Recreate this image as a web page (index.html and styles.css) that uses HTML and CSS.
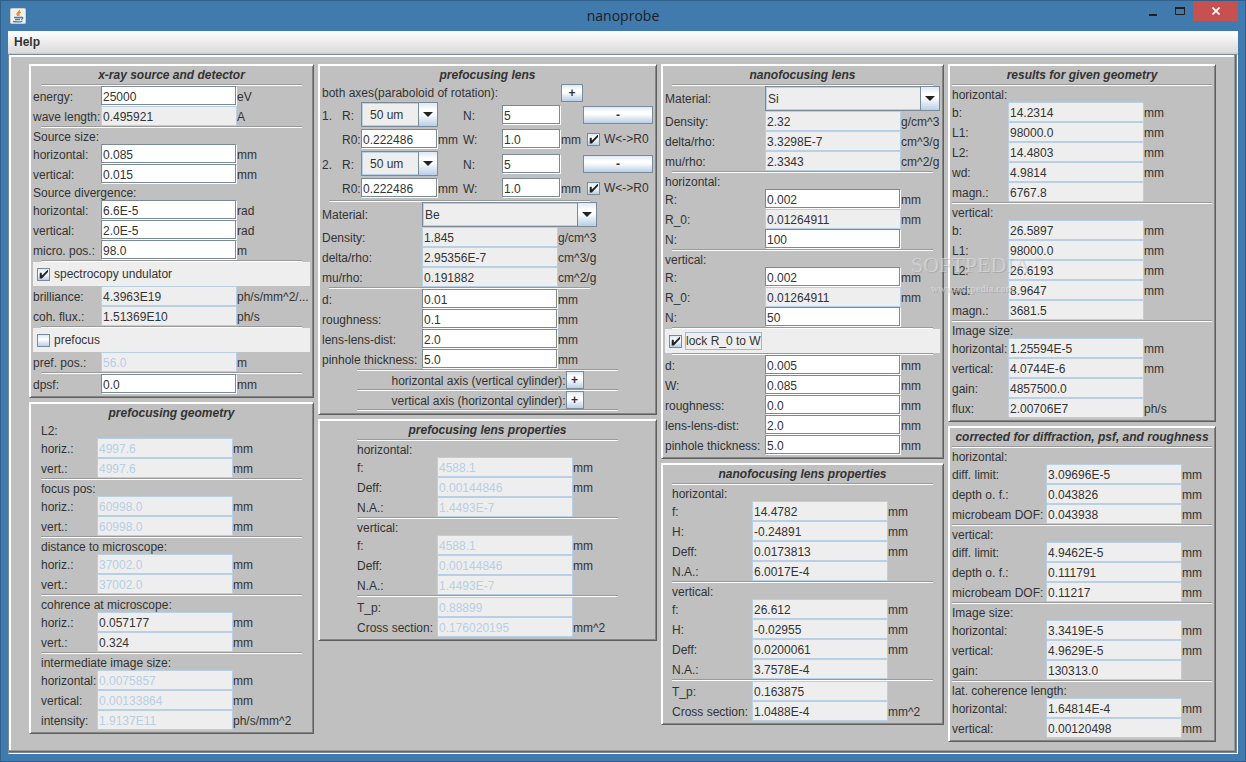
FILE: index.html
```
<!DOCTYPE html>
<html lang="en">
<head>
    <meta charset="utf-8" />
    <title>nanoprobe</title>
    <link rel="stylesheet" href="styles.css">
</head>
<body>
<div class="window">
    <header class="titlebar">
        <svg class="app-icon" width="16" height="16" viewBox="0 0 16 16">
            <rect x="0.5" y="0.5" width="15" height="15" rx="1" fill="#f1f1ee" stroke="#c9cdd0" />
            <path d="M9.500 2C10 3.800 6.500 4.500 7 6.200Q7.200 7 8 7.800M10.800 4.200Q8.200 5.200 8.800 6.400Q9.300 7.200 8.600 8" fill="none" stroke="#e8832a" stroke-width="1.300" />
            <path d="M4 9.500H11M5 11.500H10M3 13.500Q7.500 14.500 12.500 13.300M11 9.300Q13.500 9 12.500 10.600Q12 11.300 11 11.500" fill="none" stroke="#4f7ea6" stroke-width="1.300" />
        </svg>
        <h1>nanoprobe</h1>
        <div class="window-buttons">
            <button type="button" aria-label="Minimize"><svg width="10" height="10" viewBox="0 0 10 10"><path d="M1 9H9" stroke="#1e1e1e" stroke-width="2" /></svg></button>
            <button type="button" aria-label="Maximize"><svg width="10" height="8" viewBox="0 0 10 8"><path d="M0.500 1V7.500H9.500V1" fill="none" stroke="#1e1e1e" /><path d="M0 1H10" stroke="#1e1e1e" stroke-width="2" /></svg></button>
            <button type="button" class="close" aria-label="Close"><svg width="8" height="8" viewBox="0 0 8 8"><path d="M0.500 0.500L7.500 7.500M7.500 0.500L0.500 7.500" stroke="#fff" stroke-width="1.700" /></svg></button>
        </div>
    </header>

    <nav class="menubar"><button type="button">Help</button></nav>

    <main class="workspace">
        <div class="columns">

            <div class="column col-source">
                <section class="panel source">
                    <h2>x-ray source and detector</h2>
                    <hr>
                    <div class="row"><label for="energy">energy:</label><input id="energy" value="25000"><span>eV</span></div>
                    <div class="row"><label for="wavelength">wave length:</label><input id="wavelength" value="0.495921" readonly><span>A</span></div>
                    <hr>
                    <h3>Source size:</h3>
                    <div class="row"><label for="size-h">horizontal:</label><input id="size-h" value="0.085"><span>mm</span></div>
                    <div class="row"><label for="size-v">vertical:</label><input id="size-v" value="0.015"><span>mm</span></div>
                    <h3>Source divergence:</h3>
                    <div class="row"><label for="div-h">horizontal:</label><input id="div-h" value="6.6E-5"><span>rad</span></div>
                    <div class="row"><label for="div-v">vertical:</label><input id="div-v" value="2.0E-5"><span>rad</span></div>
                    <div class="row"><label for="micro-pos">micro. pos.:</label><input id="micro-pos" value="98.0"><span>m</span></div>
                    <hr>
                    <label class="check bar"><input type="checkbox" checked><span>spectrocopy undulator</span></label>
                    <div class="row"><label for="brilliance">brilliance:</label><input id="brilliance" value="4.3963E19" readonly><span>ph/s/mm^2/...</span></div>
                    <div class="row"><label for="coh-flux">coh. flux.:</label><input id="coh-flux" value="1.51369E10" readonly><span>ph/s</span></div>
                    <hr>
                    <label class="check bar"><input type="checkbox"><span>prefocus</span></label>
                    <div class="row"><label for="pref-pos">pref. pos.:</label><input id="pref-pos" value="56.0" disabled><span>m</span></div>
                    <hr>
                    <div class="row"><label for="dpsf">dpsf:</label><input id="dpsf" value="0.0"><span>mm</span></div>
                </section>

                <section class="panel geometry">
                    <h2>prefocusing geometry</h2>
                    <div class="group">
                        <h3>L2:</h3>
                        <div class="row"><label for="l2-h">horiz.:</label><input id="l2-h" value="4997.6" disabled><span>mm</span></div>
                        <div class="row"><label for="l2-v">vert.:</label><input id="l2-v" value="4997.6" disabled><span>mm</span></div>
                        <hr>
                        <h3>focus pos:</h3>
                        <div class="row"><label for="focus-h">horiz.:</label><input id="focus-h" value="60998.0" disabled><span>mm</span></div>
                        <div class="row"><label for="focus-v">vert.:</label><input id="focus-v" value="60998.0" disabled><span>mm</span></div>
                        <hr>
                        <h3>distance to microscope:</h3>
                        <div class="row"><label for="dist-h">horiz.:</label><input id="dist-h" value="37002.0" disabled><span>mm</span></div>
                        <div class="row"><label for="dist-v">vert.:</label><input id="dist-v" value="37002.0" disabled><span>mm</span></div>
                        <hr>
                        <h3>cohrence at microscope:</h3>
                        <div class="row"><label for="coh-h">horiz.:</label><input id="coh-h" value="0.057177" readonly><span>mm</span></div>
                        <div class="row"><label for="coh-v">vert.:</label><input id="coh-v" value="0.324" readonly><span>mm</span></div>
                        <hr>
                        <h3>intermediate image size:</h3>
                        <div class="row"><label for="int-h">horizontal:</label><input id="int-h" value="0.0075857" disabled><span>mm</span></div>
                        <div class="row"><label for="int-v">vertical:</label><input id="int-v" value="0.00133864" disabled><span>mm</span></div>
                        <div class="row"><label for="int-i">intensity:</label><input id="int-i" value="1.9137E11" disabled><span>ph/s/mm^2</span></div>
                    </div>
                </section>
            </div>

            <div class="column col-prefocus">
                <section class="panel lens">
                    <h2>prefocusing lens</h2>
                    <div class="axes-head"><span>both axes(paraboloid of rotation):</span><button type="button" class="btn">+</button></div>

                    <div class="lens-row">
                        <span>1.</span><label for="r-1">R:</label>
                        <div class="combo"><select id="r-1"><option>50 um</option></select></div>
                        <label for="n-1" class="second">N:</label><input id="n-1" value="5">
                        <button type="button" class="btn remove">-</button>
                    </div>
                    <div class="lens-row radius">
                        <span></span><label for="r0-1">R0:</label><input id="r0-1" value="0.222486"><span>mm</span>
                        <label for="w-1">W:</label><input id="w-1" value="1.0"><span>mm</span>
                        <label class="check"><input type="checkbox" checked><span>W&lt;-&gt;R0</span></label>
                    </div>
                    <div class="lens-row">
                        <span>2.</span><label for="r-2">R:</label>
                        <div class="combo"><select id="r-2"><option>50 um</option></select></div>
                        <label for="n-2" class="second">N:</label><input id="n-2" value="5">
                        <button type="button" class="btn remove">-</button>
                    </div>
                    <div class="lens-row radius">
                        <span></span><label for="r0-2">R0:</label><input id="r0-2" value="0.222486"><span>mm</span>
                        <label for="w-2">W:</label><input id="w-2" value="1.0"><span>mm</span>
                        <label class="check"><input type="checkbox" checked><span>W&lt;-&gt;R0</span></label>
                    </div>

                    <div class="material">
                        <hr>
                        <div class="row tall"><label for="pre-material">Material:</label><div class="combo wide"><select id="pre-material"><option>Be</option></select></div></div>
                        <div class="row"><label for="pre-density">Density:</label><input id="pre-density" value="1.845" readonly><span>g/cm^3</span></div>
                        <div class="row"><label for="pre-delta">delta/rho:</label><input id="pre-delta" value="2.95356E-7" readonly><span>cm^3/g</span></div>
                        <div class="row"><label for="pre-mu">mu/rho:</label><input id="pre-mu" value="0.191882" readonly><span>cm^2/g</span></div>
                        <hr>
                        <div class="row"><label for="pre-d">d:</label><input id="pre-d" value="0.01"><span>mm</span></div>
                        <div class="row"><label for="pre-rough">roughness:</label><input id="pre-rough" value="0.1"><span>mm</span></div>
                        <div class="row"><label for="pre-dist">lens-lens-dist:</label><input id="pre-dist" value="2.0"><span>mm</span></div>
                        <div class="row"><label for="pre-pin">pinhole thickness:</label><input id="pre-pin" value="5.0"><span>mm</span></div>
                    </div>
                    <hr>
                    <div class="axis"><span>horizontal axis (vertical cylinder):</span><button type="button" class="btn">+</button></div>
                    <hr>
                    <div class="axis"><span>vertical axis (horizontal cylinder):</span><button type="button" class="btn">+</button></div>
                    <hr>
                </section>

                <section class="panel properties">
                    <h2>prefocusing lens properties</h2>
                    <hr>
                    <div class="group">
                        <h3>horizontal:</h3>
                        <div class="row"><label for="pp-fh">f:</label><input id="pp-fh" value="4588.1" disabled><span>mm</span></div>
                        <div class="row"><label for="pp-dh">Deff:</label><input id="pp-dh" value="0.00144846" disabled><span>mm</span></div>
                        <div class="row"><label for="pp-nh">N.A.:</label><input id="pp-nh" value="1.4493E-7" disabled></div>
                        <hr>
                        <h3>vertical:</h3>
                        <div class="row"><label for="pp-fv">f:</label><input id="pp-fv" value="4588.1" disabled><span>mm</span></div>
                        <div class="row"><label for="pp-dv">Deff:</label><input id="pp-dv" value="0.00144846" disabled><span>mm</span></div>
                        <div class="row"><label for="pp-nv">N.A.:</label><input id="pp-nv" value="1.4493E-7" disabled></div>
                        <hr>
                        <div class="row"><label for="pp-tp">T_p:</label><input id="pp-tp" value="0.88899" disabled></div>
                        <div class="row"><label for="pp-cs">Cross section:</label><input id="pp-cs" value="0.176020195" disabled><span>mm^2</span></div>
                    </div>
                </section>
            </div>

            <div class="column col-nano">
                <section class="panel lens">
                    <h2>nanofocusing lens</h2>
                    <hr>
                    <div class="row tall"><label for="material">Material:</label><div class="combo wide"><select id="material"><option>Si</option></select></div></div>
                    <div class="row"><label for="density">Density:</label><input id="density" value="2.32" readonly><span>g/cm^3</span></div>
                    <div class="row"><label for="delta">delta/rho:</label><input id="delta" value="3.3298E-7" readonly><span>cm^3/g</span></div>
                    <div class="row"><label for="mu">mu/rho:</label><input id="mu" value="2.3343" readonly><span>cm^2/g</span></div>
                    <hr>
                    <h3>horizontal:</h3>
                    <div class="row"><label for="rh">R:</label><input id="rh" value="0.002"><span>mm</span></div>
                    <div class="row"><label for="r0h">R_0:</label><input id="r0h" value="0.01264911" readonly><span>mm</span></div>
                    <div class="row"><label for="nh">N:</label><input id="nh" value="100"></div>
                    <hr>
                    <h3>vertical:</h3>
                    <div class="row"><label for="rv">R:</label><input id="rv" value="0.002"><span>mm</span></div>
                    <div class="row"><label for="r0v">R_0:</label><input id="r0v" value="0.01264911" readonly><span>mm</span></div>
                    <div class="row"><label for="nv">N:</label><input id="nv" value="50"></div>
                    <hr>
                    <label class="check bar focused"><input type="checkbox" checked><span>lock R_0 to W</span></label>
                    <hr>
                    <div class="row"><label for="d">d:</label><input id="d" value="0.005"><span>mm</span></div>
                    <div class="row"><label for="w">W:</label><input id="w" value="0.085"><span>mm</span></div>
                    <div class="row"><label for="rough">roughness:</label><input id="rough" value="0.0"><span>mm</span></div>
                    <div class="row"><label for="lens-dist">lens-lens-dist:</label><input id="lens-dist" value="2.0"><span>mm</span></div>
                    <div class="row"><label for="pinhole">pinhole thickness:</label><input id="pinhole" value="5.0"><span>mm</span></div>
                </section>

                <section class="panel properties">
                    <h2>nanofocusing lens properties</h2>
                    <hr>
                    <div class="group">
                        <h3>horizontal:</h3>
                        <div class="row"><label for="np-fh">f:</label><input id="np-fh" value="14.4782" readonly><span>mm</span></div>
                        <div class="row"><label for="np-hh">H:</label><input id="np-hh" value="-0.24891" readonly><span>mm</span></div>
                        <div class="row"><label for="np-dh">Deff:</label><input id="np-dh" value="0.0173813" readonly><span>mm</span></div>
                        <div class="row"><label for="np-nh">N.A.:</label><input id="np-nh" value="6.0017E-4" readonly></div>
                        <hr>
                        <h3>vertical:</h3>
                        <div class="row"><label for="np-fv">f:</label><input id="np-fv" value="26.612" readonly><span>mm</span></div>
                        <div class="row"><label for="np-hv">H:</label><input id="np-hv" value="-0.02955" readonly><span>mm</span></div>
                        <div class="row"><label for="np-dv">Deff:</label><input id="np-dv" value="0.0200061" readonly><span>mm</span></div>
                        <div class="row"><label for="np-nv">N.A.:</label><input id="np-nv" value="3.7578E-4" readonly></div>
                        <hr>
                        <div class="row"><label for="np-tp">T_p:</label><input id="np-tp" value="0.163875" readonly></div>
                        <div class="row"><label for="np-cs">Cross section:</label><input id="np-cs" value="1.0488E-4" readonly><span>mm^2</span></div>
                    </div>
                </section>
            </div>

            <div class="column col-results">
                <section class="panel results">
                    <h2>results for given geometry</h2>
                    <hr>
                    <h3>horizontal:</h3>
                    <div class="row"><label for="res-bh">b:</label><input id="res-bh" value="14.2314" readonly><span>mm</span></div>
                    <div class="row"><label for="res-l1h">L1:</label><input id="res-l1h" value="98000.0" readonly><span>mm</span></div>
                    <div class="row"><label for="res-l2h">L2:</label><input id="res-l2h" value="14.4803" readonly><span>mm</span></div>
                    <div class="row"><label for="res-wdh">wd:</label><input id="res-wdh" value="4.9814" readonly><span>mm</span></div>
                    <div class="row"><label for="res-mh">magn.:</label><input id="res-mh" value="6767.8" readonly></div>
                    <hr>
                    <h3>vertical:</h3>
                    <div class="row"><label for="res-bv">b:</label><input id="res-bv" value="26.5897" readonly><span>mm</span></div>
                    <div class="row"><label for="res-l1v">L1:</label><input id="res-l1v" value="98000.0" readonly><span>mm</span></div>
                    <div class="row"><label for="res-l2v">L2:</label><input id="res-l2v" value="26.6193" readonly><span>mm</span></div>
                    <div class="row"><label for="res-wdv">wd:</label><input id="res-wdv" value="8.9647" readonly><span>mm</span></div>
                    <div class="row"><label for="res-mv">magn.:</label><input id="res-mv" value="3681.5" readonly></div>
                    <hr>
                    <h3>Image size:</h3>
                    <div class="row"><label for="res-ih">horizontal:</label><input id="res-ih" value="1.25594E-5" readonly><span>mm</span></div>
                    <div class="row"><label for="res-iv">vertical:</label><input id="res-iv" value="4.0744E-6" readonly><span>mm</span></div>
                    <div class="row"><label for="res-gain">gain:</label><input id="res-gain" value="4857500.0" readonly></div>
                    <div class="row"><label for="res-flux">flux:</label><input id="res-flux" value="2.00706E7" readonly><span>ph/s</span></div>
                    <div class="watermark" aria-hidden="true">
                        <span class="brand">SOFTPEDIA<small>™</small></span>
                        <span class="site">www.softpedia.com</span>
                    </div>
                </section>

                <section class="panel corrected">
                    <h2>corrected for diffraction, psf, and roughness</h2>
                    <hr>
                    <h3>horizontal:</h3>
                    <div class="row"><label for="cor-dlh">diff. limit:</label><input id="cor-dlh" value="3.09696E-5" readonly><span>mm</span></div>
                    <div class="row"><label for="cor-dfh">depth o. f.:</label><input id="cor-dfh" value="0.043826" readonly><span>mm</span></div>
                    <div class="row"><label for="cor-mdh">microbeam DOF:</label><input id="cor-mdh" value="0.043938" readonly><span>mm</span></div>
                    <hr>
                    <h3>vertical:</h3>
                    <div class="row"><label for="cor-dlv">diff. limit:</label><input id="cor-dlv" value="4.9462E-5" readonly><span>mm</span></div>
                    <div class="row"><label for="cor-dfv">depth o. f.:</label><input id="cor-dfv" value="0.111791" readonly><span>mm</span></div>
                    <div class="row"><label for="cor-mdv">microbeam DOF:</label><input id="cor-mdv" value="0.11217" readonly><span>mm</span></div>
                    <hr>
                    <h3>Image size:</h3>
                    <div class="row"><label for="cor-ih">horizontal:</label><input id="cor-ih" value="3.3419E-5" readonly><span>mm</span></div>
                    <div class="row"><label for="cor-iv">vertical:</label><input id="cor-iv" value="4.9629E-5" readonly><span>mm</span></div>
                    <div class="row"><label for="cor-gain">gain:</label><input id="cor-gain" value="130313.0" readonly></div>
                    <hr>
                    <h3>lat. coherence length:</h3>
                    <div class="row"><label for="cor-ch">horizontal:</label><input id="cor-ch" value="1.64814E-4" readonly><span>mm</span></div>
                    <div class="row"><label for="cor-cv">vertical:</label><input id="cor-cv" value="0.00120498" readonly><span>mm</span></div>
                </section>
            </div>

        </div>
    </main>
</div>
</body>
</html>
```
FILE: styles.css
```
*,
*::before {
    box-sizing: border-box;
}
body {
    margin: 0;
    font-family: "Liberation Sans", Arial, sans-serif;
    font-size: 12px;
    line-height: 20px;
    color: #333;
}
/* Native window frame */
.window {
    display: flex;
    flex-direction: column;
    min-width: max-content;
    min-height: 100vh;
    padding: 0 7px 7px;
    border: 1px solid #2f608c;
    background-color: #417aad;
}
.titlebar {
    display: grid;
    grid-template-columns: 1fr auto 1fr;
    align-items: center;
    height: 30px;
}
.app-icon {
    margin-left: 2px;
}
h1 {
    margin: 0;
    font-family: "Open Sans", sans-serif;
    font-size: 14px;
    font-weight: normal;
    color: #1e1e1e;
}
.window-buttons {
    display: flex;
    align-self: start;
    justify-self: end;
}
.window-buttons button {
    display: flex;
    align-items: center;
    justify-content: center;
    width: 27px;
    height: 20px;
    padding: 0;
    border: 0;
    background: none;
}
.window-buttons .close {
    width: 45px;
    background-color: #c75050;
}
.menubar {
    height: 23px;
    border-bottom: 1px solid #ccc;
    background: linear-gradient(#fff, #dadada);
}
.menubar button {
    padding: 0 6px;
    border: 0;
    background: none;
    font: bold 12px/22px "Liberation Sans", Arial, sans-serif;
    color: #333;
}
/* Scroll pane with a raised inner bevel */
.workspace {
    display: flex;
    flex: 1;
    align-items: flex-start;
    justify-content: center;
    padding: 9px 3px 10px 2px;
    border: 1px solid #fff;
    border-top-color: #7a8a99;
    border-left-color: #7a8a99;
    box-shadow: inset -1px -1px #7a8a99, inset -2px -2px #666, inset -3px -3px #999, inset 2px 2px #fff;
    background-color: #c0c0c0;
}
.columns {
    display: flex;
    align-items: flex-start;
    gap: 4px;
}
.column {
    display: flex;
    flex-direction: column;
    gap: 4px;
}
.col-source {
    width: 285px;
}
.col-prefocus {
    width: 339px;
}
.col-nano {
    width: 283px;
}
.col-results {
    width: 268px;
}
.panel {
    position: relative;
    padding: 3px;
    border: 1px solid #5f5f5f;
    border-top-color: #fff;
    border-left-color: #fff;
    box-shadow: inset 1px 1px #fff, inset -1px -1px #868686;
}
.source {
    --label: 68px;
}
.geometry,
.results {
    --label: 56px;
}
.lens {
    --label: 100px;
}
.properties {
    --label: 80px;
}
.corrected {
    --label: 94px;
}
h2,
h3 {
    margin: 0;
    font-size: 12px;
    line-height: 14px;
}
h2 {
    padding-bottom: 2px;
    font-style: italic;
    text-align: center;
    white-space: nowrap;
}
h3 {
    padding-top: 2px;
    font-weight: normal;
}
hr {
    width: 261px;
    max-width: 100%;
    height: 2px;
    margin: 0 auto;
    border: 0;
    border-top: 1px solid #999;
    background-color: #fff;
}
.group {
    width: 261px;
    margin: 0 auto;
}
.material {
    width: 275px;
}
/* One labelled quantity with its unit */
.row {
    display: grid;
    grid-template-columns: var(--label) 136px 1fr;
    align-items: center;
    height: 20px;
    white-space: nowrap;
}
.row.tall {
    height: 25px;
}
.row > label,
.row > span,
.lens-row > label,
.lens-row > span,
.axes-head > span,
.axis > span {
    padding-top: 2px;
    line-height: 18px;
}
.tall > label,
.axes-head > span {
    padding-top: 0;
}
input {
    width: 100%;
    min-width: 0;
    height: 20px;
    margin: 0;
    padding: 2px 1px 0;
    border: 1px solid #fff;
    border-top-color: #7a8a99;
    border-left-color: #7a8a99;
    border-radius: 0;
    box-shadow: inset -1px -1px #7a8a99;
    background-color: #fff;
    font: inherit;
    line-height: 16px;
    color: #333;
}
input:read-only:not([type="checkbox"]) {
    border-color: #b8cfe5;
    box-shadow: none;
    background-color: #eee;
}
input:disabled {
    color: #b8cfe5;
}
.btn {
    height: 18px;
    padding: 0;
    border: 1px solid #7a8a99;
    background: linear-gradient(#dde8f3, #fff 30%, #fff 45%, #b8cfe5);
    font: bold 12px/14px "Liberation Sans", Arial, sans-serif;
    color: #333;
}
/* Combo box */
.combo {
    position: relative;
    height: 25px;
}
.combo.wide {
    grid-column: 2 / -1;
}
.combo select {
    display: block;
    width: 100%;
    height: 25px;
    padding: 0 22px 0 8px;
    border: 1px solid #7a8a99;
    border-radius: 0;
    box-shadow: inset 0 0 0 1px #b8cfe5;
    background-color: #eee;
    font: inherit;
    color: #333;
    appearance: none;
}
.combo.wide select {
    padding-left: 2px;
}
.combo::before {
    content: "";
    position: absolute;
    top: 0;
    right: 0;
    width: 20px;
    height: 25px;
    border: 1px solid #7a8a99;
    background: linear-gradient(#dde8f3, #fff 30%, #fff 45%, #b8cfe5);
    pointer-events: none;
}
.combo::after {
    content: "";
    position: absolute;
    top: 10px;
    right: 5px;
    border: 5px solid transparent;
    border-top-color: #222;
    border-bottom: 0;
    pointer-events: none;
}
/* Check boxes */
.check {
    display: flex;
    align-items: center;
    height: 24px;
    padding-left: 4px;
    white-space: nowrap;
}
.lens-row > .check {
    padding-top: 0;
}
.check input {
    width: 13px;
    height: 13px;
    margin-right: 3px;
    padding: 1px;
    border: 1px solid #7a8a99;
    box-shadow: none;
    background: linear-gradient(#dde8f3, #fff 40%, #b8cfe5);
    appearance: none;
}
.check input:checked::before {
    content: "";
    display: block;
    width: 9px;
    height: 9px;
    background-color: #222;
    clip-path: polygon(8% 36%, 30% 36%, 32% 66%, 100% 0, 100% 28%, 32% 100%, 8% 100%);
}
.check span {
    padding: 0 1px;
}
.check.bar {
    background-color: #eee;
}
.check.bar span {
    line-height: 16px;
}
.check.focused span {
    padding: 0;
    border: 1px solid #a3b8cc;
}
/* Lens stack of the prefocusing optics */
.axes-head,
.lens-row {
    display: grid;
    grid-template-columns: 20px 19px 77px 25px 39px 59px 22px 70px;
    align-items: center;
    height: 25px;
}
.axes-head {
    height: 18px;
}
.axes-head span {
    grid-column: 1 / 7;
}
.lens-row.radius {
    height: 24px;
}
.lens-row .second {
    grid-column: 5;
}
.lens-row .remove {
    grid-column: 8;
}
.axis {
    display: flex;
    align-items: center;
    justify-content: center;
    height: 18px;
}
.axis .btn {
    width: 18px;
}
/* Translucent mark over the result columns */
.watermark {
    position: absolute;
    top: 186px;
    left: -38px;
    font-family: "Liberation Serif", serif;
    color: rgba(232, 232, 232, 0.5);
    text-shadow: 1px 1px rgba(110, 110, 110, 0.25);
    pointer-events: none;
}
.watermark span {
    display: block;
    white-space: nowrap;
}
.watermark .brand {
    font-size: 22px;
    line-height: 28px;
}
.watermark small {
    padding-left: 4px;
    font-size: 8px;
    vertical-align: 10px;
    line-height: 8px;
}
.watermark .site {
    padding-left: 20px;
    font-size: 10px;
    font-weight: bold;
    line-height: 20px;
}
```
